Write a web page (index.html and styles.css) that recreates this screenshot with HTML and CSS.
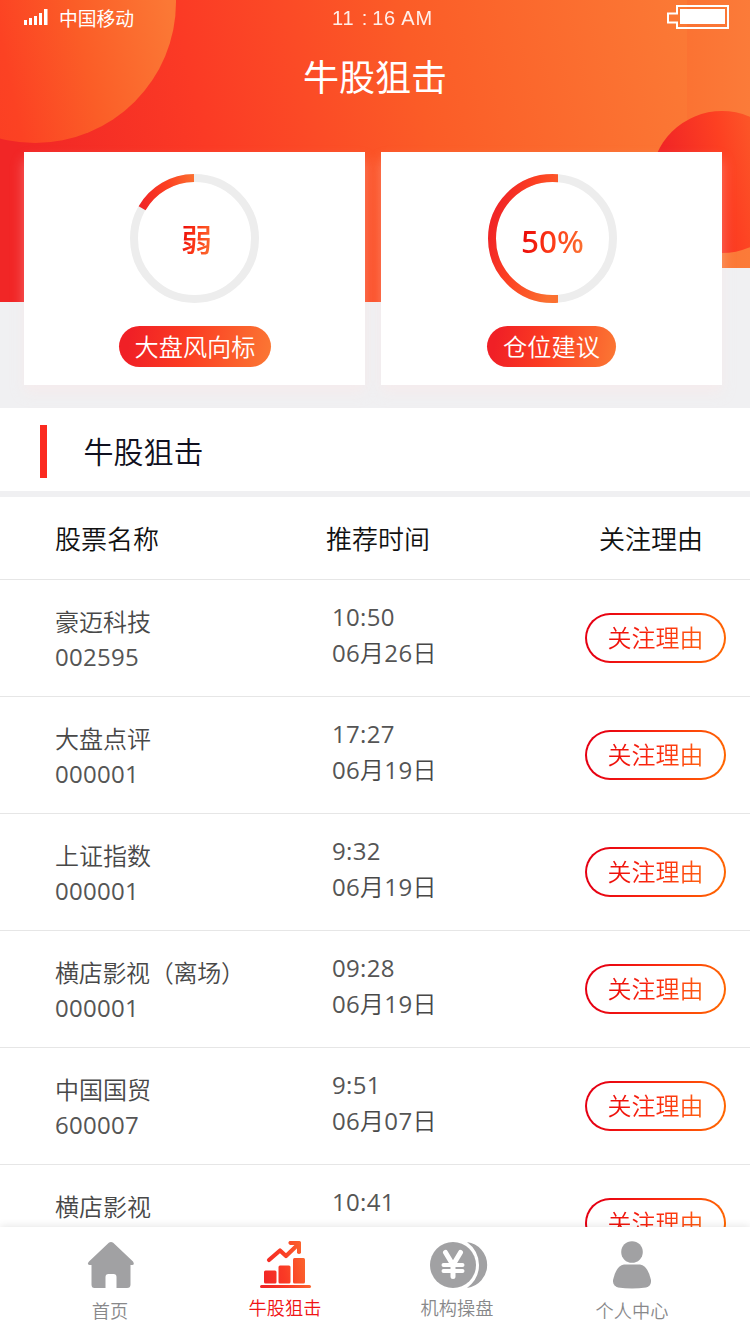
FILE: index.html
```html
<!DOCTYPE html>
<html lang="zh-CN">
<head>
<meta charset="utf-8">
<title>牛股狙击</title>
<link rel="stylesheet" href="styles.css">
</head>
<body>
<div class="screen">
  <header class="hero">
    <svg class="hero-bg" width="750" height="302" viewBox="0 0 750 302">
      <defs>
        <linearGradient id="base" gradientUnits="userSpaceOnUse" x1="40" y1="250" x2="700" y2="110">
          <stop offset="0" stop-color="#f12626"/><stop offset=".27" stop-color="#fb3a25"/><stop offset=".6" stop-color="#fb5c27"/><stop offset="1" stop-color="#fb7935"/>
        </linearGradient>
        <linearGradient id="edge" gradientUnits="userSpaceOnUse" x1="640" y1="0" x2="750" y2="0">
          <stop offset="0" stop-color="#fb6c2e"/><stop offset="1" stop-color="#fb7b39"/>
        </linearGradient>
        <linearGradient id="sun" gradientUnits="userSpaceOnUse" x1="-70" y1="60" x2="170" y2="10">
          <stop offset="0" stop-color="#fa3a24"/><stop offset=".3" stop-color="#fc4223"/><stop offset=".62" stop-color="#fb5d27"/><stop offset="1" stop-color="#fb7835"/>
        </linearGradient>
        <linearGradient id="ball" gradientUnits="userSpaceOnUse" x1="665" y1="160" x2="790" y2="135">
          <stop offset="0" stop-color="#f12626"/><stop offset=".45" stop-color="#fd4022"/><stop offset="1" stop-color="#fb6c2e"/>
        </linearGradient>
      </defs>
      <rect width="687" height="302" fill="url(#base)"/>
      <rect x="687" width="63" height="268" fill="url(#edge)"/>
      <circle cx="35" cy="2" r="141" fill="url(#sun)"/>
      <circle cx="722" cy="182" r="71" fill="url(#ball)"/>
    </svg>
    <div class="status">
      <div class="carrier">
        <svg width="24" height="17" viewBox="0 0 24 17" fill="#fff"><path d="M0 12h3v5H0zM5 10h3v7H5zM10 8h3v9h-3zM15 5h3v12h-3zM20 1h3.500v16H20z"/></svg>
        <span>中国移动</span>
      </div>
      <div class="clock">11 <span class="colon">:</span>16 AM</div>
      <svg class="battery" width="62" height="24" viewBox="0 0 62 24"><path d="M10 1h51v22H10v-5.500H1v-9h9z" fill="none" stroke="#fff" stroke-width="2"/><rect x="13" y="4" width="45" height="15" fill="#fff"/></svg>
    </div>
    <h1 class="title">牛股狙击</h1>
    <div class="cards">
      <section class="card">
        <div class="gauge">
          <svg width="129" height="129" viewBox="0 0 129 129" fill="none" stroke-width="8">
            <defs><linearGradient id="arcA" gradientUnits="userSpaceOnUse" x1="10" y1="20" x2="66" y2="8"><stop offset="0" stop-color="#f12626"/><stop offset=".5" stop-color="#fd4022"/><stop offset="1" stop-color="#fb7030"/></linearGradient></defs>
            <circle cx="64.500" cy="64.500" r="60.500" stroke="#ededed"/>
            <path d="M12.100 34.250A60.500 60.500 0 0 1 64 4" stroke="url(#arcA)"/>
          </svg>
          <span class="reading reading-word">弱</span>
        </div>
        <div class="pill">大盘风向标</div>
      </section>
      <section class="card card-half">
        <div class="gauge">
          <svg width="129" height="129" viewBox="0 0 129 129" fill="none" stroke-width="8">
            <defs>
              <linearGradient id="arcB" gradientUnits="userSpaceOnUse" x1="4" y1="55" x2="74" y2="75"><stop offset="0" stop-color="#f12626"/><stop offset=".4" stop-color="#fd4022"/><stop offset="1" stop-color="#fb7030"/></linearGradient>
              <clipPath id="half"><rect width="70" height="129"/></clipPath>
            </defs>
            <circle cx="64.500" cy="64.500" r="60.500" stroke="#ededed"/>
            <circle cx="64.500" cy="64.500" r="60.500" stroke="url(#arcB)" clip-path="url(#half)"/>
          </svg>
          <span class="reading">50%</span>
        </div>
        <div class="pill">仓位建议</div>
      </section>
    </div>
  </header>

  <div class="section-title"><span class="bar"></span><h2>牛股狙击</h2></div>

  <main class="table">
    <div class="head"><span>股票名称</span><span>推荐时间</span><span>关注理由</span></div>
    <div class="row"><div class="stock"><p>豪迈科技</p><p class="num">002595</p></div><div class="time"><p>10:50</p><p>06<span class="unit">月</span>26<span class="unit">日</span></p></div><button class="reason"><span>关注理由</span></button></div>
    <div class="row"><div class="stock"><p>大盘点评</p><p class="num">000001</p></div><div class="time"><p>17:27</p><p>06<span class="unit">月</span>19<span class="unit">日</span></p></div><button class="reason"><span>关注理由</span></button></div>
    <div class="row"><div class="stock"><p>上证指数</p><p class="num">000001</p></div><div class="time"><p>9:32</p><p>06<span class="unit">月</span>19<span class="unit">日</span></p></div><button class="reason"><span>关注理由</span></button></div>
    <div class="row"><div class="stock"><p class="wide-name">横店影视（离场）</p><p class="num">000001</p></div><div class="time"><p>09:28</p><p>06<span class="unit">月</span>19<span class="unit">日</span></p></div><button class="reason"><span>关注理由</span></button></div>
    <div class="row"><div class="stock"><p>中国国贸</p><p class="num">600007</p></div><div class="time"><p>9:51</p><p>06<span class="unit">月</span>07<span class="unit">日</span></p></div><button class="reason"><span>关注理由</span></button></div>
    <div class="row"><div class="stock"><p>横店影视</p></div><div class="time"><p>10:41</p></div><button class="reason"><span>关注理由</span></button></div>
  </main>

  <nav class="tabs">
    <a class="tab low">
      <svg width="48" height="48" viewBox="0 0 48 48" fill="#a1a1a3"><path d="M21.800 1.800Q24 .2 26.200 1.800L46 20.500Q48 23.800 45 24H43.500V43.500Q43.500 47 40 47H29.500V36Q29.500 33 26.500 33H21.500Q18.500 33 18.500 36V47H7.500Q4.500 47 4.500 43.500V24H2.500Q-.5 23.500 2 20.500Z"/></svg>
      <span>首页</span>
    </a>
    <a class="tab active">
      <svg width="52" height="48" viewBox="0 0 52 48">
        <defs><linearGradient id="chart" gradientUnits="userSpaceOnUse" x1="2" y1="30" x2="49" y2="20"><stop offset="0" stop-color="#f12626"/><stop offset=".45" stop-color="#fa3a25"/><stop offset="1" stop-color="#fb6a2e"/></linearGradient></defs>
        <g fill="url(#chart)"><rect x="4" y="29.500" width="12.500" height="13" rx="1.500"/><rect x="18.500" y="24.500" width="12" height="18" rx="1.500"/><rect x="33" y="17" width="12" height="25.500" rx="1.500"/><rect x="0" y="44" width="51" height="3" rx="1.500"/></g>
        <path d="M9 19 20 9.500 26 15 37 4.500" fill="none" stroke="url(#chart)" stroke-width="4.200" stroke-linecap="round" stroke-linejoin="round"/>
        <path d="M29.500 0H39.500Q41 0 41 1.500V12Q39 14 37 12V4H30Q27 2 29.500 0Z" fill="url(#chart)"/>
      </svg>
      <span>牛股狙击</span>
    </a>
    <a class="tab wide">
      <svg width="58" height="48" viewBox="0 0 58 48"><circle cx="23" cy="24" r="23" fill="#a1a1a3"/><path d="M37 1A23.200 23.200 0 0 1 37 47Q49 38 49 24T37 1Z" fill="#a1a1a3"/><g fill="none" stroke="#fff" stroke-linecap="round" stroke-linejoin="round"><path d="M15.500 11.500 23 24 30.500 11.500M23 24V35.500" stroke-width="5"/><path d="M13.500 24H32.500M13.500 30H32.500" stroke-width="4"/></g></svg>
      <span>机构操盘</span>
    </a>
    <a class="tab low">
      <svg width="38" height="48" viewBox="0 0 38 48" fill="#a1a1a3"><circle cx="19" cy="11" r="10.800"/><path d="M11 23.500H27Q35 25 38 39 38.500 45 33 46.500 26 47.500 19 47.500 12 47.500 5 46.500-.5 45 0 39 3 25 11 23.500Z"/></svg>
      <span>个人中心</span>
    </a>
  </nav>
</div>
</body>
</html>
```
FILE: styles.css
```css
* { box-sizing: border-box; margin: 0; padding: 0; }

body {
  width: 750px;
  height: 1334px;
  overflow: hidden;
  background: #fff;
  font-family: "Open Sans", "Noto Sans CJK SC", sans-serif;
  font-weight: 350;
}

.screen { display: flex; flex-direction: column; height: 1334px; }

.hero {
  position: relative;
  flex: none;
  height: 408px;
  background: #f0f0f2;
}
.hero-bg { position: absolute; top: 0; left: 0; }

.status {
  position: relative;
  display: grid;
  grid-template-columns: 1fr auto 1fr;
  align-items: center;
  height: 38px;
  padding: 0 21px 0 24px;
  color: #fff;
}
.carrier { display: flex; align-items: center; gap: 11px; height: 38px; font: 400 18.800px/36px "Noto Sans CJK SC", sans-serif; }
.carrier span { height: 38px; }
.carrier svg { margin-bottom: 6px; }
.clock { font: 400 20px/36px "Liberation Sans", sans-serif; letter-spacing: .8px; white-space: pre; opacity: .9; margin: 0 0 2px 12px; }
.colon { margin: 0 4px 0 1px; }
.battery { justify-self: end; margin-bottom: 4px; }

.title {
  position: relative;
  height: 114px;
  color: #fff;
  font-size: 36px;
  font-weight: 400;
  line-height: 79px;
  text-align: center;
}

.cards { position: relative; display: flex; gap: 16px; padding: 0 28px 0 24px; }
.card {
  display: flex;
  flex: 1;
  flex-direction: column;
  align-items: center;
  height: 233px;
  padding-top: 22px;
  background: #fff;
  box-shadow: 0 8px 12px rgba(255, 228, 228, .35);
}
.card-half .gauge { margin-left: 2px; }
.gauge { display: grid; place-items: center; width: 129px; height: 129px; }
.gauge > * { grid-area: 1 / 1; }
.reading {
  color: transparent;
  background: linear-gradient(100deg, #ea0808 5%, #fd3b18 50%, #fb7030 95%);
  background-clip: text;
  -webkit-background-clip: text;
  font-family: "Noto Sans", "Noto Sans CJK SC", sans-serif;
  font-size: 31.500px;
  font-weight: 500;
  line-height: 44px;
  margin-top: 4px;
}
.reading-word { font-size: 31px; margin: 0 0 0 4px; }
.pill {
  height: 41px;
  margin: 23px 0 0 1px;
  padding: 0 15.500px;
  border-radius: 21px;
  background: linear-gradient(100deg, #f02026 8%, #fb3c22 45%, #fb7834 100%);
  color: #fff;
  font-size: 24.200px;
  line-height: 41px;
}
.card-half .pill { margin-left: 0; padding: 0 16px; }

.section-title {
  display: flex;
  flex: none;
  align-items: center;
  gap: 36.500px;
  height: 89px;
  padding-left: 40px;
  border-bottom: 6px solid #f0f0f2;
}
.bar { width: 7px; height: 53px; margin-top: 4px; background: #fb2a20; }
.section-title h2 { color: #101020; font-size: 30px; font-weight: 350; line-height: 44px; margin-top: 4px; }

.table { flex: 1; min-height: 0; overflow: hidden; }
.head, .row { display: grid; grid-template-columns: 271px 1fr auto; border-bottom: 1px solid #e6e6e6; }
.head { height: 83px; padding: 0 47px 0 55px; color: #111; font-size: 26px; line-height: 84px; }
.row { height: 117px; padding: 0 24px 0 55px; color: #484848; font-size: 24px; }
.stock { padding-top: 24px; line-height: 35px; white-space: nowrap; }
.num, .time { color: #555; font-weight: 400; letter-spacing: .3px; }
.unit { color: #484848; font-weight: 350; }
.wide-name { letter-spacing: -.3px; }
.time { padding: 19px 0 0 6px; line-height: 36px; }
.reason {
  width: 141px;
  height: 50px;
  margin-top: 33px;
  border: 2px solid transparent;
  border-radius: 25px;
  background: linear-gradient(#fff, #fff) padding-box, linear-gradient(100deg, #e60012 10%, #fb2a10 50%, #ff6a00 100%) border-box;
  font: inherit;
  line-height: 46px;
}
.reason span {
  display: inline-block;
  color: transparent;
  background: linear-gradient(100deg, #ea0808, #fb2a10 50%, #ff6510);
  background-clip: text;
  -webkit-background-clip: text;
}

.tabs {
  position: relative;
  display: grid;
  flex: none;
  grid-template-columns: 174px 176px 168px 182px;
  height: 107px;
  padding: 14px 0 0 23px;
  background: #fff;
  box-shadow: 0 -1px 8px rgba(0, 0, 0, .1);
}
.tab { display: flex; flex-direction: column; align-items: center; color: #88888a; font-size: 18.200px; line-height: 26px; }
.tab span { margin-top: 6px; }
.tab svg { margin-left: 2px; }
.low span { margin-top: 9px; }
.low:last-child svg { margin-left: 0; }
.wide svg { margin-left: 4px; }
.active { color: #f01414; }
```
